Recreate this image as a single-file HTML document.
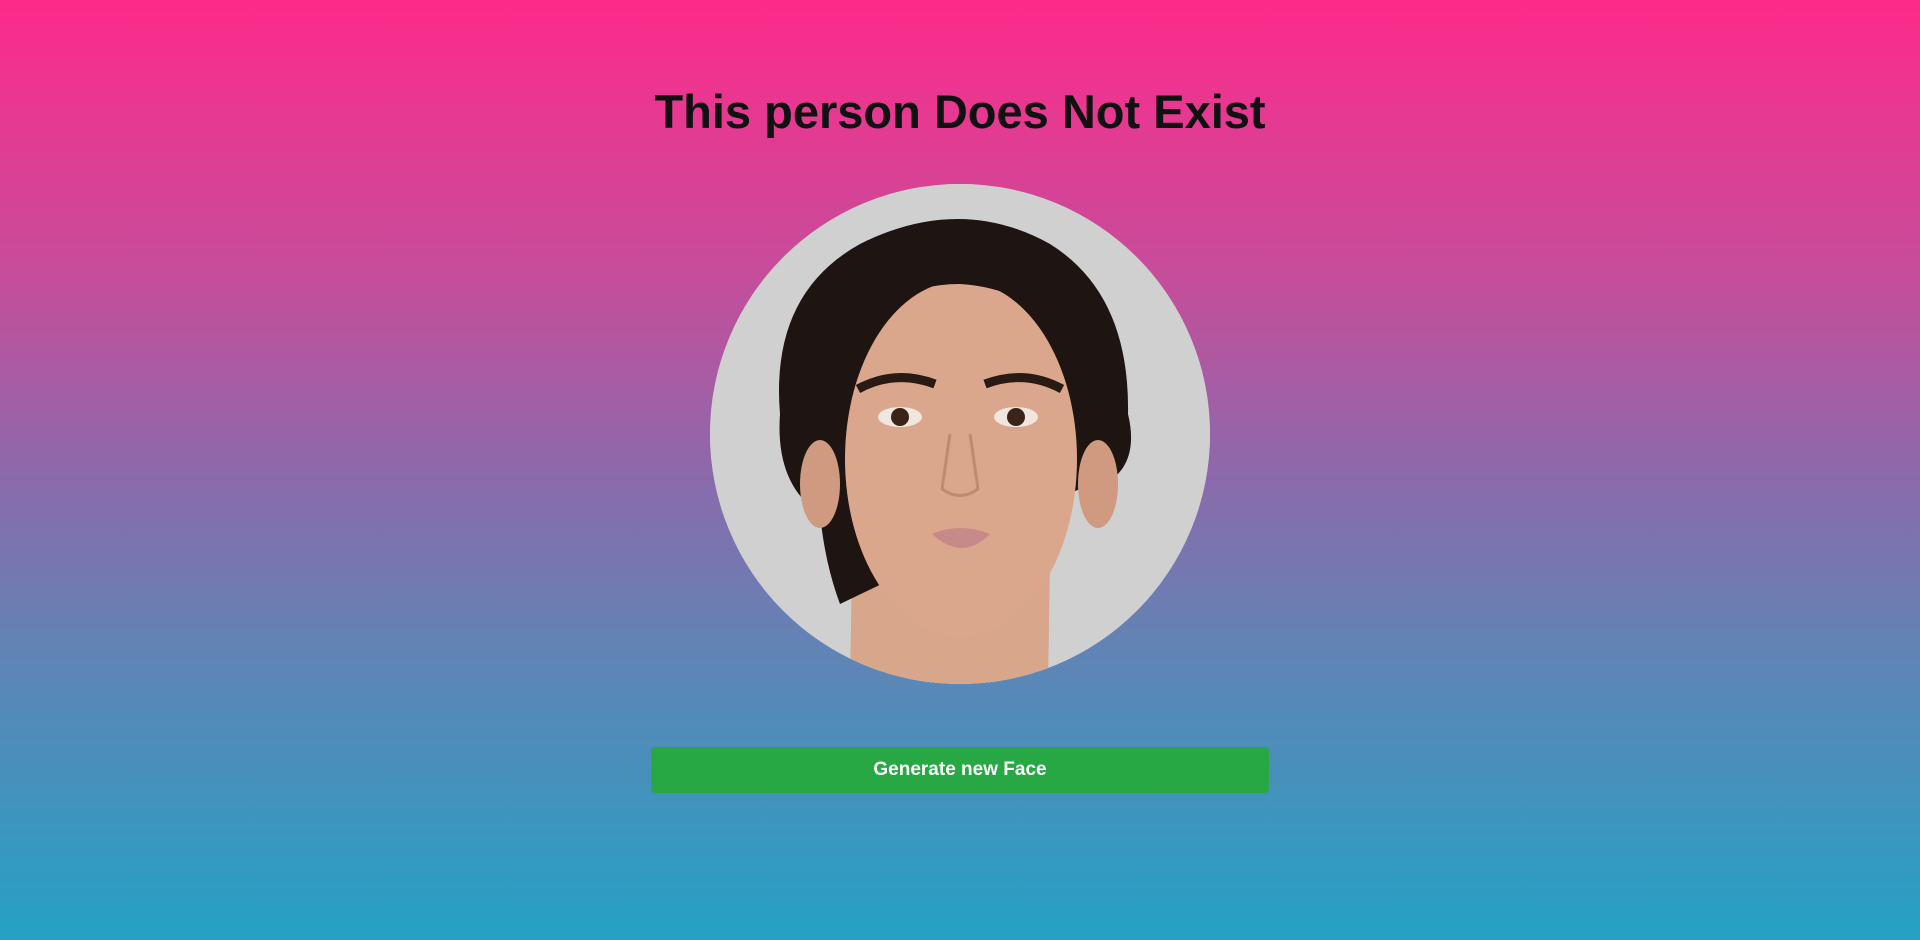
<!DOCTYPE html>
<html><head><meta charset="utf-8"><style>
html,body{margin:0;padding:0;}
body{width:1920px;height:940px;overflow:hidden;background:linear-gradient(to bottom,#fe2a8a 0%,#c44e9b 30%,#8d69ab 50%,#5f85b6 70%,#24a1c5 100%);font-family:"Liberation Sans",Arial,sans-serif;position:relative;}
h1{position:absolute;top:82px;left:0;width:1920px;margin:0;text-align:center;font-size:47px;font-weight:bold;color:#111;line-height:60px;}
.face{position:absolute;left:710px;top:184px;width:500px;height:500px;border-radius:50%;overflow:hidden;background:#d0cfcf;}
.btn{position:absolute;left:651px;top:747px;width:618px;height:46px;background:#28a745;border-radius:4px;color:#fff;font-weight:bold;font-size:19px;text-align:center;line-height:46px;}
</style></head><body>
<h1>This person Does Not Exist</h1>
<div class="face">
<svg width="500" height="500" viewBox="0 0 500 500">
<rect width="500" height="500" fill="#d1d0d0"/>
<path d="M140 500 L142 380 L340 380 L338 500Z" fill="#d8a68a"/>
<path d="M70 230 Q60 110 150 60 Q250 10 340 60 Q420 110 418 230 Q430 280 395 300 L380 300 L130 420 Q115 380 110 330 Q65 300 70 230Z" fill="#1e1512"/>
<ellipse cx="251" cy="275" rx="116" ry="178" fill="#dba78c"/>
<path d="M140 170 Q160 90 250 90 Q340 95 360 170 Q330 105 250 100 Q170 100 140 170Z" fill="#1e1512"/>
<path d="M132 120 Q250 40 370 130 L360 180 Q330 100 250 95 Q170 95 140 180Z" fill="#1e1512"/>
<ellipse cx="110" cy="300" rx="20" ry="44" fill="#cf9a80"/>
<ellipse cx="388" cy="300" rx="20" ry="44" fill="#cf9a80"/>
<ellipse cx="190" cy="233" rx="22" ry="10" fill="#f0e6e0"/>
<ellipse cx="306" cy="233" rx="22" ry="10" fill="#f0e6e0"/>
<circle cx="190" cy="233" r="9" fill="#3a2418"/>
<circle cx="306" cy="233" r="9" fill="#3a2418"/>
<path d="M148 205 Q185 185 225 200" stroke="#2a1a14" stroke-width="9" fill="none"/>
<path d="M275 200 Q315 185 352 205" stroke="#2a1a14" stroke-width="9" fill="none"/>
<path d="M240 250 L232 305 Q250 318 268 305 L260 250" stroke="#c08a70" stroke-width="3" fill="none"/>
<path d="M222 350 Q250 338 280 350 Q252 378 222 350Z" fill="#c88a88"/>
</svg>
</div>
<div class="btn">Generate new Face</div>
</body></html>
